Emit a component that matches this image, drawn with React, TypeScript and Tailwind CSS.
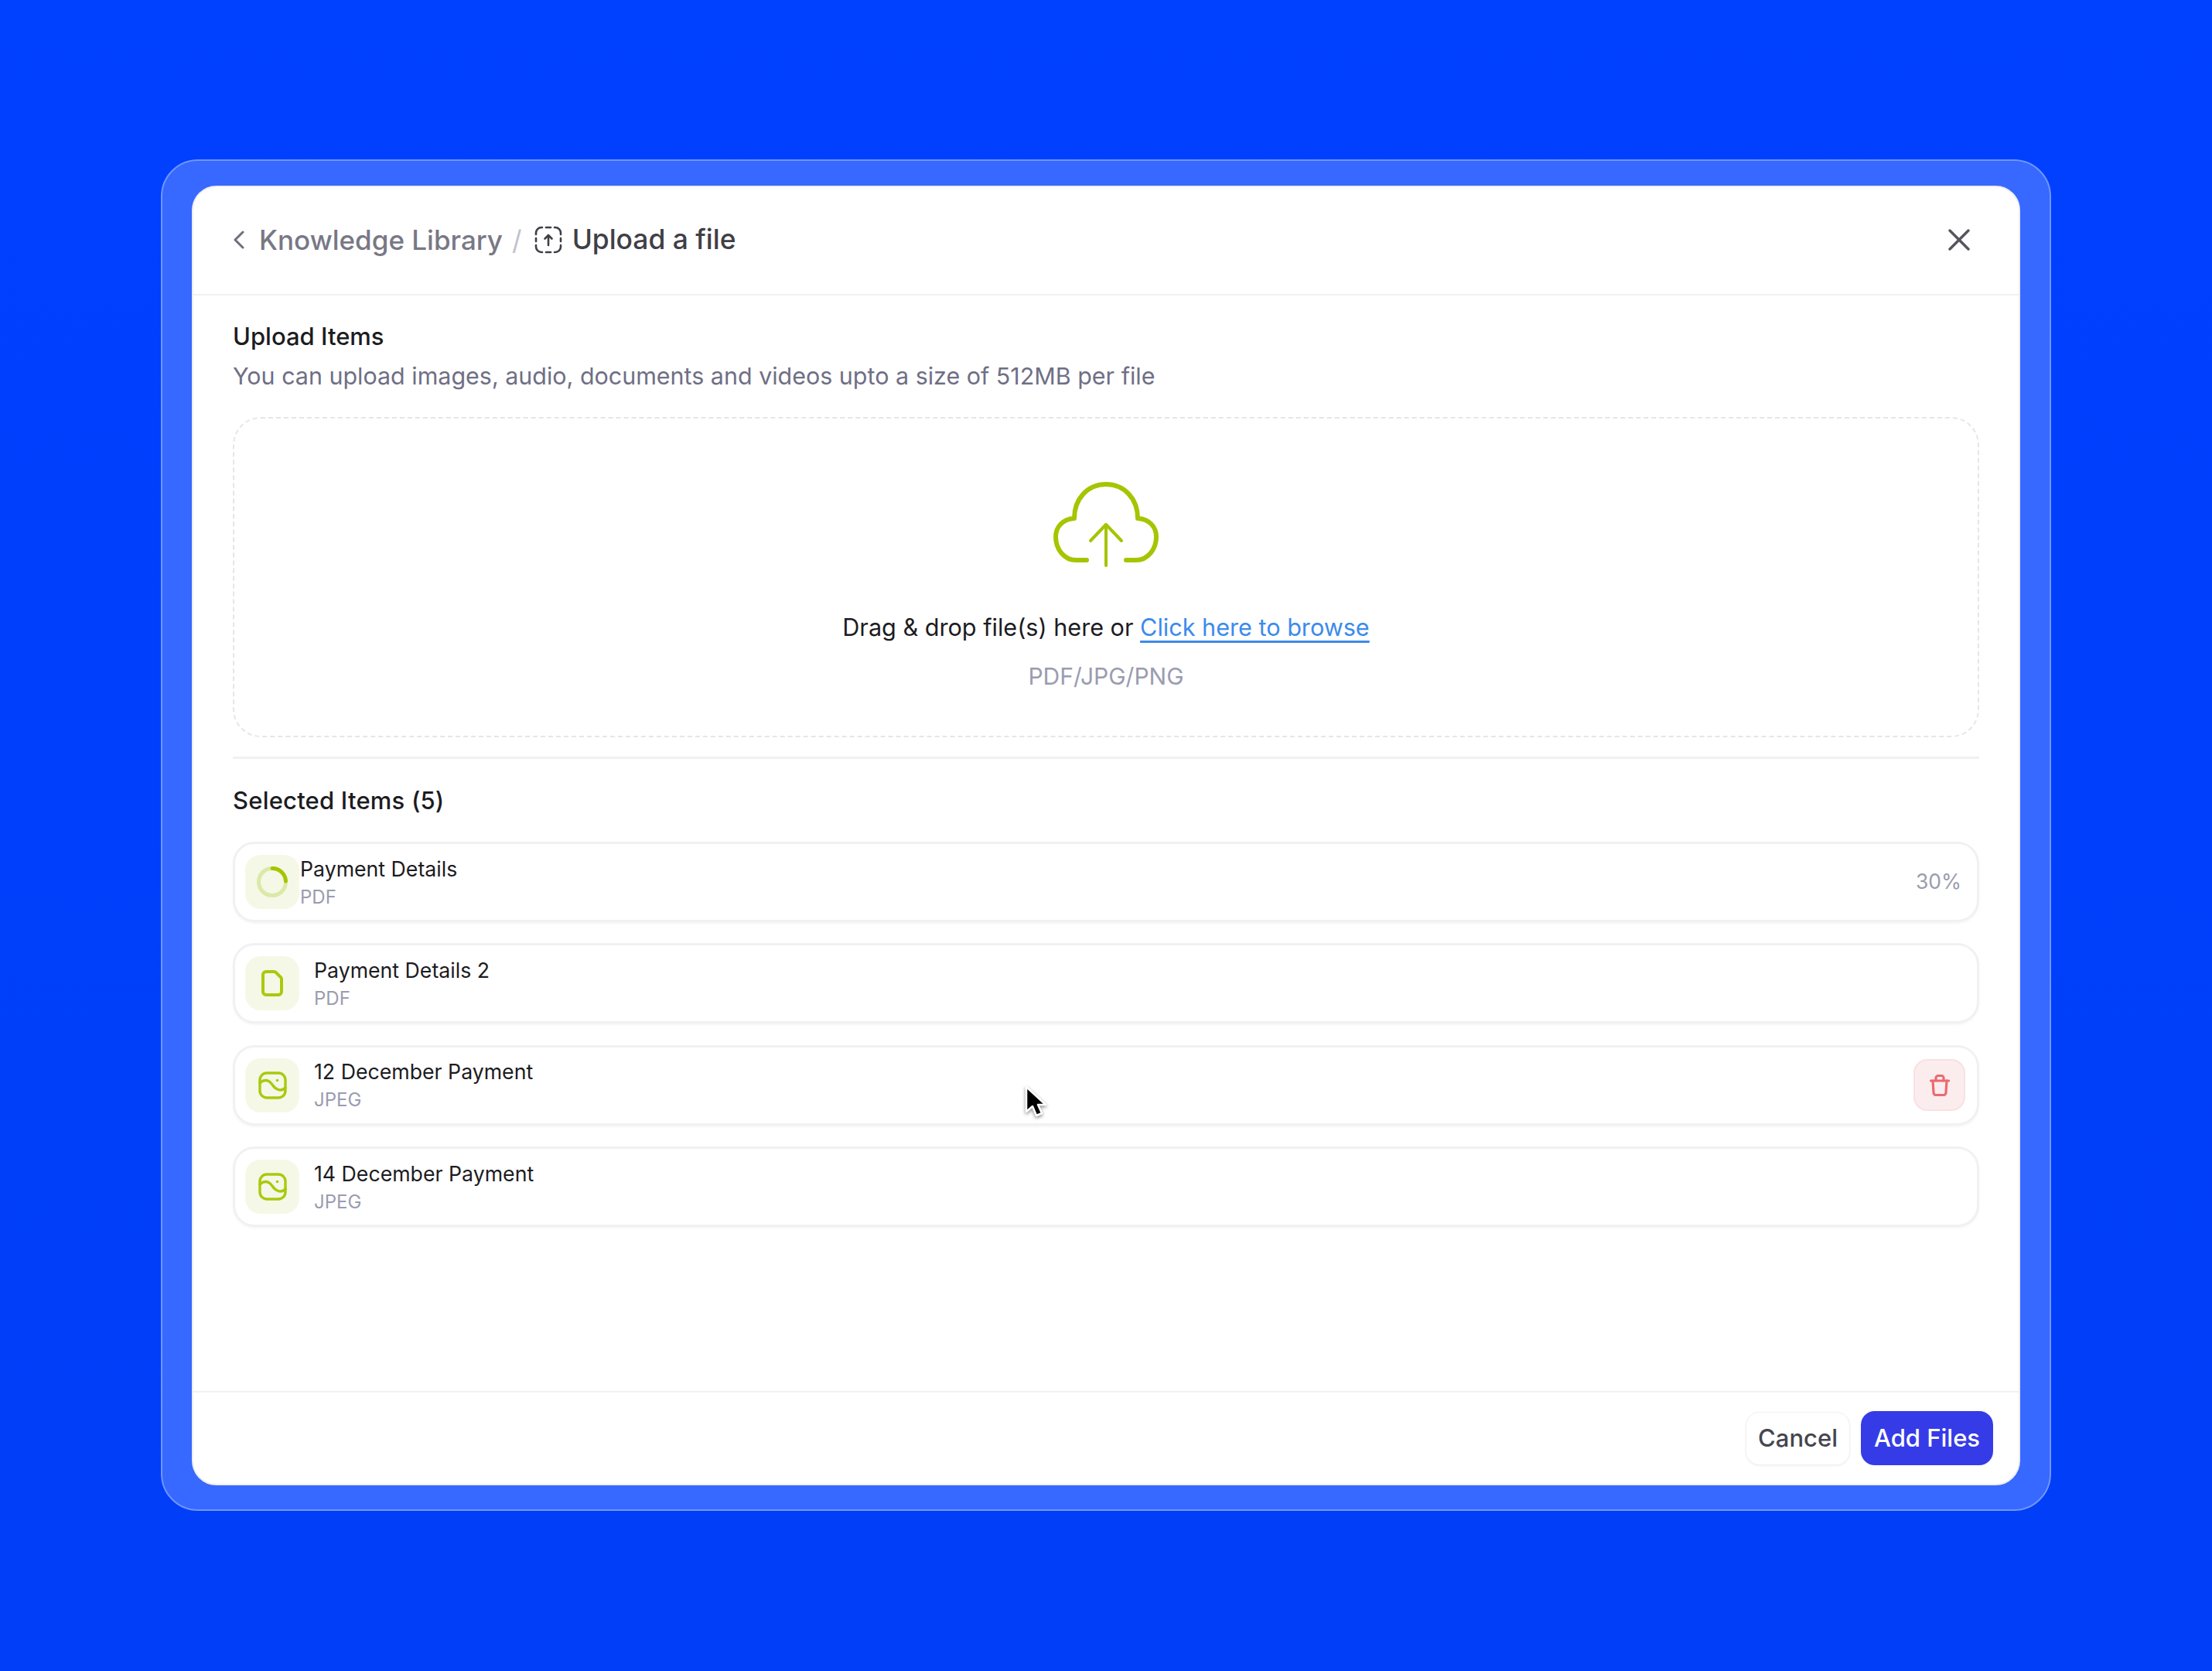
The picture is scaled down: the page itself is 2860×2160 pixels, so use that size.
// App.tsx
const inter = "font-['Inter','Noto_Sans',sans-serif]";

type Kind = 'spinner' | 'file' | 'image';

const items: { name: string, type: string, kind: Kind, tight?: boolean, percent?: string, trash?: boolean }[] = [
  { name: 'Payment Details', type: 'PDF', kind: 'spinner', tight: true, percent: '30%' },
  { name: 'Payment Details 2', type: 'PDF', kind: 'file' },
  { name: '12 December Payment', type: 'JPEG', kind: 'image', trash: true },
  { name: '14 December Payment', type: 'JPEG', kind: 'image' },
];

function UploadSquare() {
  return (
    <svg width="36" height="36" viewBox="0 0 36 36" fill="none" stroke="#3f3f46" strokeWidth="2.6" strokeLinecap="round" strokeLinejoin="round">
      <path d="M2 11V9a7 7 0 0 1 7-7h1" />
      <path d="M15 2h6" />
      <path d="M26 2h1a7 7 0 0 1 7 7v2" />
      <path d="M34 16v4" />
      <path d="M34 25v2a7 7 0 0 1-7 7h-1" />
      <path d="M21 34h-6" />
      <path d="M10 34H9a7 7 0 0 1-7-7v-2" />
      <path d="M2 20v-4" />
      <path d="M18 25V12M13.5 16.5 18 12l4.500 4.500" />
    </svg>
  );
}

function Cloud() {
  return (
    <svg width="136" height="110" viewBox="0 0 136 110" fill="none" stroke="#a6c400" strokeLinecap="round" strokeLinejoin="round">
      <path strokeWidth="6" d="M43 101H29C14 101 3 87 3 71C3 58 12 48 27 47C27 22 44 3 68 3C92 3 109 22 109 47C124 48 133 58 133 71C133 87 122 101 107 101H94" />
      <path strokeWidth="4" d="M68 108V55M48 76 68 55l20 21" />
    </svg>
  );
}

function ItemIcon({ kind }: { kind: Kind }) {
  if (kind === 'spinner') {
    return (
      <svg width="40" height="40" viewBox="0 0 40 40" fill="none" strokeWidth="5">
        <circle cx="20" cy="20" r="17.500" stroke="#dbe9a8" />
        <path d="M20 2.500A17.500 17.500 0 0 1 37.500 19" stroke="#a6c400" strokeLinecap="round" />
      </svg>
    );
  }
  if (kind === 'file') {
    return (
      <svg width="28" height="34" viewBox="0 0 28 34" fill="none" stroke="#a9c90f" strokeWidth="4" strokeLinejoin="round">
        <path d="M6 2h10.500a3 3 0 0 1 2.100.9l6.500 6.500a3 3 0 0 1 .9 2.100V28a4 4 0 0 1-4 4H6a4 4 0 0 1-4-4V6a4 4 0 0 1 4-4Z" />
      </svg>
    );
  }
  return (
    <svg width="37" height="36" viewBox="0 0 37 36" fill="none" stroke="#a9c90f" strokeWidth="3.400" strokeLinecap="round">
      <rect x="2" y="2" width="33" height="32" rx="9" />
      <path d="M2 15C7 10 13 10 18 17C22 23 29 27 35 21" />
      <circle cx="24.500" cy="11.500" r="1.800" fill="#a9c90f" stroke="none" />
    </svg>
  );
}

function Trash() {
  return (
    <svg width="26" height="28" viewBox="0 0 26 28" fill="none" stroke="#ec6a6f" strokeWidth="3.200" strokeLinecap="round" strokeLinejoin="round">
      <path d="M1.500 8h23" />
      <path d="M8 8V4.500a3 3 0 0 1 3-3h4a3 3 0 0 1 3 3V8" />
      <path d="M4 8l1 15.500a3 3 0 0 0 3 3h10a3 3 0 0 0 3-3L22 8" />
    </svg>
  );
}

function ItemRow({ item }: { item: typeof items[number] }) {
  return (
    <div className="flex h-[104px] items-center rounded-[28px] border-[3px] border-[#f1f1f3] bg-white pl-[13px] pr-[15px] shadow-[0_2px_3px_rgba(20,20,40,0.04)]">
      <div className="flex h-[70px] w-[70px] shrink-0 items-center justify-center rounded-[20px] bg-[#f5f8e6]">
        <ItemIcon kind={item.kind} />
      </div>
      <div className={item.tight ? 'ml-[1px] flex flex-col' : 'ml-[19px] flex flex-col'}>
        <span className="text-[26.700px] leading-[36px] text-[#1c1c22]">{item.name}</span>
        <span className="mt-[3px] text-[24px] leading-[32px] text-[#9a9cb0]">{item.type}</span>
      </div>
      {item.percent && <span className="ml-auto pr-[5px] text-[26.500px] text-[#9a9cb0]">{item.percent}</span>}
      {item.trash && (
        <button className="ml-auto flex h-[67px] w-[67px] items-center justify-center rounded-[18px] border-2 border-[#f8e1e3] bg-[#fbedee]">
          <Trash />
        </button>
      )}
    </div>
  );
}

export default function App() {
  return (
    <div className={`${inter} relative flex h-[2160px] w-[2860px] items-start justify-center bg-linear-to-b from-[#0040ff] to-[#003ef7] pt-[206px]`}>
      <div className="h-[1747px] w-[2444px] rounded-[48px] border-2 border-[#7096ff] bg-[#3768ff] px-[38px] pt-[32px] pb-[31px]">
        <div className="flex h-full flex-col rounded-[32px] border-2 border-[#eeeef1] bg-white">
          <header className="flex h-[140px] shrink-0 items-center border-b-2 border-[#f1f1f3] pb-[2px] pl-[51px] pr-[62px] text-[35px] font-medium">
            <svg width="16" height="24" viewBox="0 0 16 24" fill="none" stroke="#6f6f7d" strokeWidth="3" strokeLinecap="round" strokeLinejoin="round">
              <path d="M13 2 3 12l10 10" />
            </svg>
            <span className="ml-[18px] text-[#787885]">Knowledge Library</span>
            <span className="ml-[12px] font-normal text-[#c0c2cf]">/</span>
            <span className="ml-[16px] flex"><UploadSquare /></span>
            <span className="ml-[13px] text-[35.400px] text-[#3f3f46]">Upload a file</span>
            <svg className="ml-auto" width="30" height="30" viewBox="0 0 30 30" fill="none" stroke="#55555f" strokeWidth="3.400" strokeLinecap="round">
              <path d="M3 3l24 24M27 3 3 27" />
            </svg>
          </header>

          <main className="min-h-0 flex-1 px-[51px] pt-[33px]">
            <h2 className="text-[31px] leading-[40px] font-medium text-[#1c1c22]">Upload Items</h2>
            <p className="mt-[11px] text-[30.450px] leading-[40px] text-[#6f6f85]">You can upload images, audio, documents and videos upto a size of 512MB per file</p>

            <div className="mt-[33px] flex h-[414px] flex-col items-center rounded-[36px] border-2 border-dashed border-[#e6e6e9] pt-[82px]">
              <Cloud />
              <p className="mt-[58px] text-[30.600px] leading-[40px] text-[#1c1c22]">
                Drag &amp; drop file(s) here or <a className="text-[#3b8beb] underline underline-offset-[6px]">Click here to browse</a>
              </p>
              <p className="mt-[23px] text-[30px] leading-[40px] text-[#9a9cb0]">PDF/JPG/PNG</p>
            </div>

            <div className="mt-[25px] border-t-[3px] border-[#f1f1f3] pt-[34px]">
              <h2 className="text-[31px] leading-[40px] font-medium tracking-[0.2px] text-[#1c1c22]">Selected Items (5)</h2>
              <div className="mt-[33px] flex flex-col gap-[27.400px]">
                {items.map(item => <ItemRow key={item.name} item={item} />)}
              </div>
            </div>
          </main>

          <footer className="flex h-[120px] shrink-0 items-center justify-end gap-[14px] border-t-2 border-[#f1f1f3] pr-[33px] text-[31px] font-medium">
            <button className="h-[69px] w-[135px] rounded-[18px] border border-[#f1f1f3] bg-white text-[#45454f] shadow-[0_1px_3px_rgba(20,20,40,0.06)]">Cancel</button>
            <button className="h-[70px] w-[171px] rounded-[18px] bg-[#363be8] text-white">Add Files</button>
          </footer>
        </div>
      </div>

      {/* mouse pointer sitting over the third row */}
      <svg className="absolute left-[1322px] top-[1402px] drop-shadow-[0_2px_2px_rgba(0,0,0,0.45)]" width="32" height="44" viewBox="0 0 32 44">
        <path d="M5 3v32l8-7 5 12 7-3-5-11h10Z" fill="#000" stroke="#fff" strokeWidth="2.500" strokeLinejoin="round" />
      </svg>
    </div>
  );
}
